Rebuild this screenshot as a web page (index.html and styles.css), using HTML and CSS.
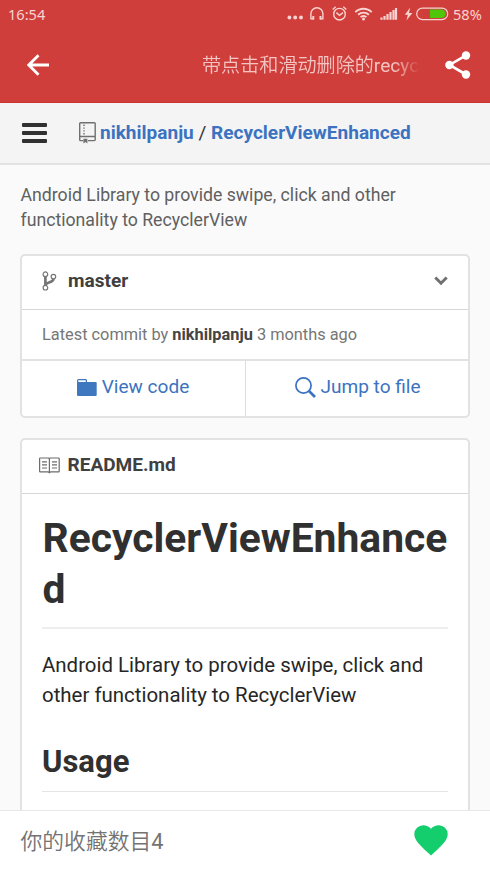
FILE: index.html
```html
<!DOCTYPE html>
<html lang="zh-CN">
<head>
<meta charset="utf-8">
<title>RecyclerViewEnhanced</title>
<link rel="stylesheet" href="styles.css">
</head>
<body>
<div class="screen">
  <div class="status">
    <span class="clock">16:54</span>
    <svg class="status-icons" width="162" height="28" viewBox="0 0 162 28">
      <g fill="#f8d3d1"><circle cx="2.4" cy="17.5" r="1.9"/><circle cx="8.2" cy="17.5" r="1.9"/><circle cx="14" cy="17.5" r="1.9"/></g>
      <g fill="none" stroke="#f8d3d1" stroke-width="1.4">
        <path d="M27 18.9H23.9V13.8a6 6 0 0 1 12 0v5.1H32.9"/>
        <path d="M26.3 16v3.4M33.5 16v3.4" stroke-width="2"/>
        <circle cx="52.5" cy="14.2" r="5.8"/>
        <path d="M49.4 12.6l3.1 2.7 3.5-2.7M45.7 9.6l3-2.8M59.3 9.6l-3-2.8"/>
        <path d="M68.3 12.2a11.5 11.5 0 0 1 16.4 0M71.1 14.8a7.7 7.7 0 0 1 10.8 0M73.6 17.2a4 4 0 0 1 5.8 0" stroke-width="1.9"/>
      </g>
      <circle cx="76.5" cy="18.9" r="1.5" fill="#f8d3d1"/>
      <path d="M94.5 17.6v2.2M97.5 16v3.8M100.5 14v5.8M103.5 12v7.8M106.5 10v9.8M109 8v11.8" stroke="#f8d3d1" stroke-width="2.2"/>
      <path d="M123.3 7.5l-5.5 7.3h3.1l-1.5 5.6 6-7.5h-3.5z" fill="#f8d3d1"/>
      <path d="M143 9.5h11.4a4.3 4.3 0 0 1 0 8.6H143z" fill="#4fc60a"/>
      <rect x="129.7" y="8.1" width="31" height="11.5" rx="5.7" fill="none" stroke="#f8d3d1" stroke-width="1.2"/>
    </svg>
    <span class="battery">58%</span>
  </div>
  <div class="appbar">
    <svg class="back" width="22" height="22" viewBox="0 0 22 22"><path d="M22 11H2M11.5 1.2L1.8 11l9.7 9.8" fill="none" stroke="#fff" stroke-width="2.8"/></svg>
    <div class="title">带点击和滑动删除的<span class="latin">recyc</span></div>
    <svg class="share" width="26" height="28" viewBox="0 0 26 28"><path d="M21 4.4L4.5 14 21 23.5" fill="none" stroke="#fff" stroke-width="2.6"/><g fill="#fff"><circle cx="21" cy="4.5" r="4.2"/><circle cx="4.4" cy="14" r="4.2"/><circle cx="21" cy="23.5" r="4.2"/></g></svg>
  </div>
  <div class="web">
    <div class="header">
      <div class="menu"><i></i><i></i><i></i></div>
      <svg class="repo" width="17" height="22" viewBox="0 0 17 22"><g fill="none" stroke="#707070" stroke-width="1.4"><path d="M4 18.6H1.5a.8.8 0 0 1-.8-.8V1.5a.8.8 0 0 1 .8-.8h13.9a.8.8 0 0 1 .8.8v16.3a.8.8 0 0 1-.8.8H9M.7 14.5h15.5"/><path d="M5 2.6v11" stroke-dasharray="1.4 1.4"/></g><path d="M4.4 16.8h4v4.8l-2-1.7-2 1.7z" fill="#707070"/></svg>
      <div class="crumb"><b>nikhilpanju</b> / <b>RecyclerViewEnhanced</b></div>
    </div>
    <p class="desc">Android Library to provide swipe, click and other functionality to RecyclerView</p>
    <div class="card branch-card">
      <div class="branch">
        <svg width="15" height="20" viewBox="0 0 15 20"><g fill="none" stroke="#767676"><path d="M3.4 5v10M11.4 7v1.2c0 3.3-7.6 2.8-8 6.3" stroke-width="2.7"/><g stroke-width="1.2" fill="#fff"><circle cx="3.4" cy="3.2" r="2.3"/><circle cx="3.4" cy="16.7" r="2.3"/><circle cx="11.4" cy="5.6" r="2.3"/></g></g></svg>
        <b>master</b>
        <svg class="chev" width="14" height="10" viewBox="0 0 14 10"><path d="M1.3 1.5L7 7.2l5.7-5.7" fill="none" stroke="#707070" stroke-width="3"/></svg>
      </div>
      <div class="commit">Latest commit by <b>nikhilpanju</b> 3 months ago</div>
      <div class="actions">
        <div class="action"><svg width="20" height="17" viewBox="0 0 20 17"><path d="M.6 3V1.4a.8.8 0 0 1 .8-.8h7.2a.8.8 0 0 1 .8.8V3" fill="#fff" stroke="#4078c0" stroke-width="1.2"/><path d="M0 3h18.8a.9.9 0 0 1 .9.9V16a1 1 0 0 1-1 1H1a1 1 0 0 1-1-1z" fill="#4078c0"/></svg><span>View code</span></div>
        <div class="action"><svg width="21" height="21" viewBox="0 0 21 21"><circle cx="8.5" cy="8.5" r="7.6" fill="none" stroke="#3b73c0" stroke-width="1.7"/><path d="M14 14l6 6" stroke="#3b73c0" stroke-width="2.6"/></svg><span>Jump to file</span></div>
      </div>
    </div>
    <div class="card readme">
      <div class="file">
        <svg width="21" height="17" viewBox="0 0 21 17"><g fill="none" stroke="#6c6c6c"><path d="M10.4 1.7L9.7 1H1.2a.6.6 0 0 0-.6.6v12.6c0 .3.3.6.6.6h8l1.2 1 1.2-1h8c.3 0 .6-.3.6-.6V1.6a.6.6 0 0 0-.6-.6h-8.5z" stroke-width="1.2"/><path d="M10.4 1v15M3 4.8h5M3 7.9h5M3 11h5M13 4.8h5M13 7.9h5M13 11h5" stroke-width="1.2"/></g></svg>
        <b>README.md</b>
      </div>
      <div class="body">
        <h1>RecyclerViewEnhanced</h1>
        <p>Android Library to provide swipe, click and other functionality to RecyclerView</p>
        <h2>Usage</h2>
      </div>
    </div>
  </div>
  <div class="footer">
    <span>你的收藏数目<span class="latin">4</span></span>
    <svg width="34" height="31" viewBox="0 0 34 31"><path d="M17 30.5L14.6 28.3C6 20.5.3 15.4.3 9.1A8.9 8.9 0 0 1 9.3.3c2.9 0 5.9 1.3 7.7 3.5C18.8 1.6 21.8.3 24.7.3a8.9 8.9 0 0 1 9 8.8c0 6.3-5.7 11.4-14.3 19.2z" fill="#14cd6c"/></svg>
  </div>
</div>
</body>
</html>
```
FILE: styles.css
```css
* { box-sizing: border-box; }
body { margin: 0; font-family: Roboto, "Noto Sans CJK SC", sans-serif; }
svg { display: block; flex: none; }
.latin { font-weight: 400; }
.screen { width: 490px; height: 871px; display: flex; flex-direction: column; overflow: hidden; background: #fafafa; }
.status { flex: none; height: 28px; display: flex; align-items: center; background: #cf3e3a; color: #f8d3d1; font: 14.6px/28px "Noto Sans", sans-serif; padding-left: 8px; }
.clock { width: 279px; }
.battery { margin-left: 4px; }
.appbar { flex: none; height: 75px; display: flex; align-items: center; background: #cf3e3a; border-bottom: 1px solid #cb3330; padding: 0 19px 0 27px; }
.title { margin-left: 153px; padding-top: 1px; width: 216px; white-space: nowrap; color: #f3c4c2; font-size: 19.1px; font-weight: 350; line-height: 30px; -webkit-mask-image: linear-gradient(to right, #000 192px, transparent 218px); mask-image: linear-gradient(to right, #000 192px, transparent 218px); }
.share { margin-left: 27px; }
.web { flex: 1; min-height: 0; overflow: hidden; }
.header { height: 62px; background: #f4f4f4; border-bottom: 2px solid #e2e2e2; display: flex; align-items: center; padding-left: 22px; }
.menu { width: 25px; display: flex; flex-direction: column; gap: 4px; }
.menu i { height: 4px; border-radius: 1px; background: #303030; }
.repo { margin-left: 32px; }
.crumb { margin-left: 4px; padding-bottom: 2px; font-size: 19.05px; color: #333; white-space: nowrap; }
.crumb b { color: #3b73c0; }
.desc { margin: 18px 20px 0 20.5px; font-size: 17.7px; line-height: 24.5px; color: #606060; }
.card { margin: 0 20px; background: #fff; border: 2px solid #e2e2e2; border-radius: 5px; }
.branch-card { margin-top: 22px; height: 164px; }
.branch { height: 54px; border-bottom: 1px solid #d8d8d8; display: flex; align-items: center; padding: 0 20px 3px 19.5px; font-size: 19.05px; color: #404040; }
.branch b { margin-left: 11.5px; padding-bottom: 2px; }
.chev { margin-left: auto; }
.commit { height: 51px; border-bottom: 2px solid #e2e2e2; padding-left: 20px; font-size: 16.35px; line-height: 50px; color: #767676; white-space: nowrap; }
.commit b { color: #444; }
.actions { display: grid; grid-template-columns: 224px 1fr; height: 55px; }
.action { display: flex; justify-content: center; align-items: center; gap: 5px; padding: 0 0 3px 1px; font-size: 19.05px; color: #3b73c0; }
.action span { padding-bottom: 2px; }
.action:first-child { border-right: 1px solid #ddd; gap: 5px; padding-left: 0; padding-right: 1px; }
.readme { margin-top: 20px; height: 430px; }
.file { height: 54px; border-bottom: 1px solid #d8d8d8; display: flex; align-items: center; padding: 0 0 3px 17px; gap: 7.5px; font-size: 19.05px; color: #404040; }
.file b { padding-bottom: 2px; }
.body { padding: 19px 20px 0; color: #303030; }
h1 { margin: 0; padding-left: .5px; font-size: 40.8px; line-height: 51px; height: 116px; border-bottom: 2px solid #eee; overflow-wrap: anywhere; }
.body p { margin: 21px 0; font-size: 20.45px; line-height: 30px; color: #262626; }
h2 { margin: 0; padding-top: 8px; font-size: 31px; line-height: 45px; height: 61px; border-bottom: 1px solid #e5e5e5; }
.footer { flex: none; height: 61px; border-top: 1px solid #e8e8e8; background: #fff; display: flex; align-items: center; justify-content: space-between; padding: 0 42px 3px 20.5px; font-size: 21.8px; color: #737373; font-weight: 350; }
.footer svg { margin-top: 2px; }
```
